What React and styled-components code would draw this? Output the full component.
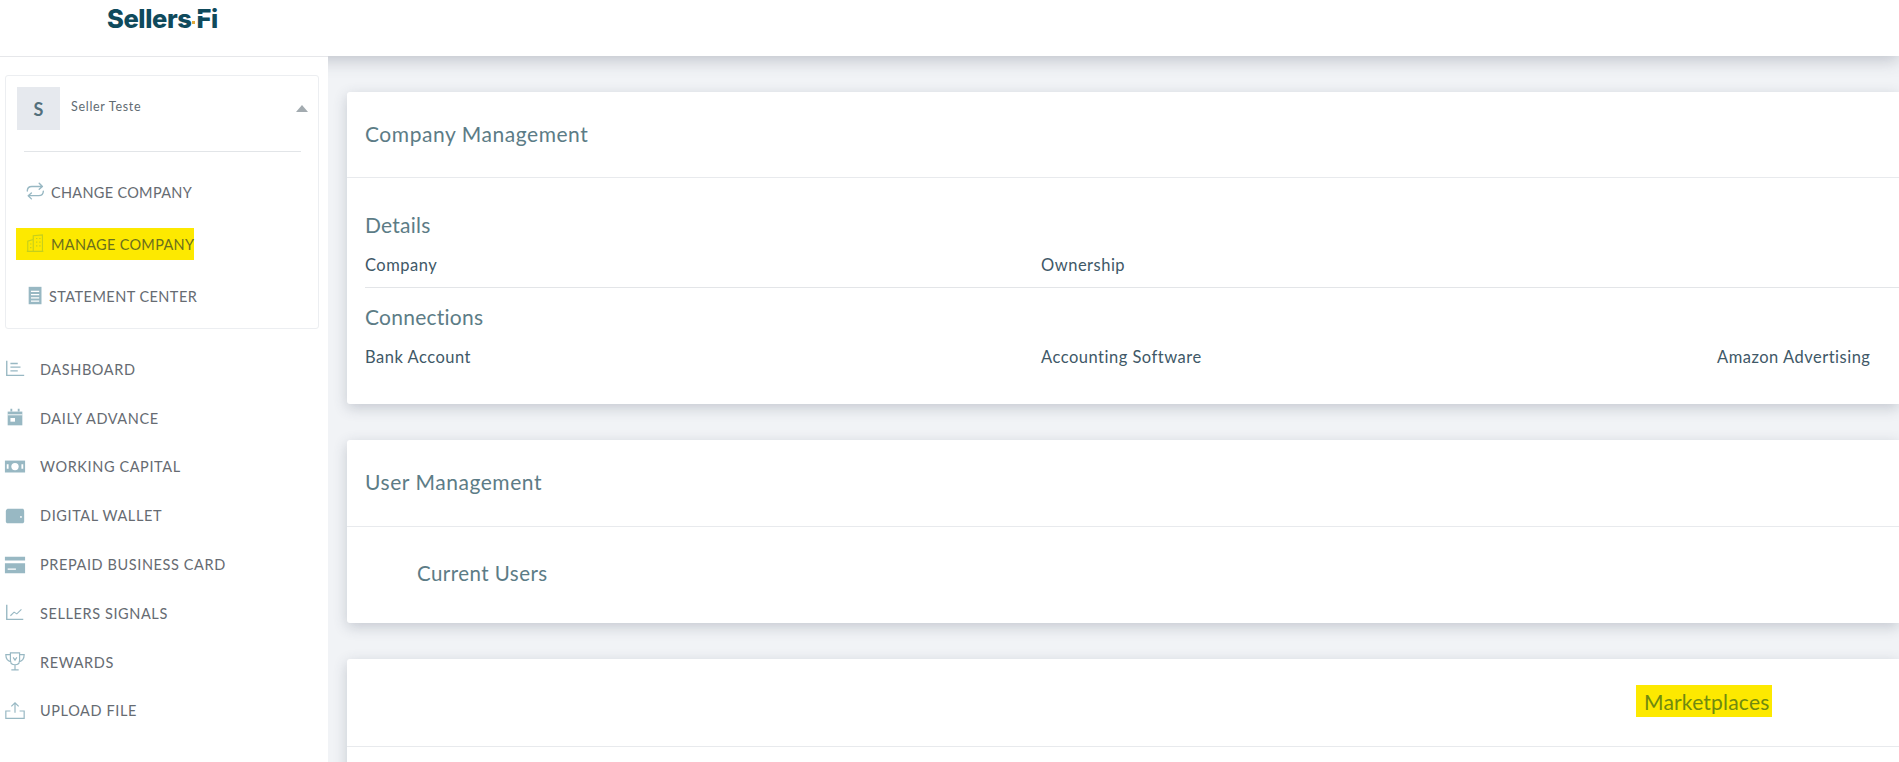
import React from "react";
import styled, { createGlobalStyle } from "styled-components";

const Global = createGlobalStyle`
  html, body { margin: 0; padding: 0; background: #fff; overflow: hidden; }
  body { font-family: "Lato", "Open Sans", sans-serif; }
  * { box-sizing: border-box; }
`;

const Page = styled.div`
  width: 1899px;
  height: 762px;
  display: flex;
  flex-direction: column;
  overflow: hidden;
`;

const Header = styled.header`
  height: 56px;
  flex: none;
  background: #fff;
  padding: 4px 0 0 107px;
  box-shadow: 0 4px 16px rgba(60, 70, 90, 0.28);
  position: relative;
  z-index: 1;
`;

const Logo = styled.div`
  display: flex;
  align-items: center;
  height: 28px;
  font-family: "Inter", sans-serif;
  font-weight: 800;
  font-size: 25.5px;
  letter-spacing: -0.4px;
  color: #0f4a5c;
`;

const LogoDot = styled.span`
  width: 3px;
  height: 3px;
  margin: 9px 1px 0 1px;
  background: #e0a93b;
  flex: none;
`;

const LogoFi = styled.span`
  position: relative;
  &::after {
    content: "";
    position: absolute;
    left: 0;
    right: 8px;
    top: 11px;
    height: 2px;
    background: #fff;
  }
`;

const Body = styled.div`
  flex: 1;
  display: flex;
  min-height: 0;
`;

const Sidebar = styled.aside`
  width: 328px;
  flex: none;
  background: #fff;
  border-top: 1px solid #e6e7ea;
  padding: 18px 9px 0 5px;
  position: relative;
  z-index: 2;
`;

const AccountBox = styled.div`
  height: 254px;
  border: 1px solid #eceef1;
  border-radius: 3px;
  padding: 11px 11px 0;
`;

const AccountHead = styled.div`
  display: flex;
  align-items: flex-start;
  padding-bottom: 22px;
  margin-bottom: 14px;
  position: relative;
  &::after {
    content: "";
    position: absolute;
    left: 7px;
    right: 6px;
    bottom: 0;
    height: 1px;
    background: #e2e5e8;
  }
`;

const Avatar = styled.div`
  width: 43px;
  height: 43px;
  flex: none;
  background: #e6e9ee;
  display: flex;
  align-items: center;
  justify-content: center;
  font-size: 18px;
  font-weight: 700;
  color: #54707c;
`;

const SellerName = styled.div`
  margin: 12px 0 0 11px;
  font-size: 12.5px;
  letter-spacing: 0.7px;
  color: #5f6b72;
  flex: 1;
`;

const Caret = styled.span`
  width: 0;
  height: 0;
  margin: 18px -1px 0 0;
  border-left: 6px solid transparent;
  border-right: 6px solid transparent;
  border-bottom: 7px solid #a3abb0;
`;

const AccountItem = styled.div`
  height: 52px;
  display: flex;
  align-items: center;
  gap: ${(p) => p.$gap}px;
  padding-left: 8px;
`;

const Highlight = styled.span`
  display: inline-flex;
  align-items: center;
  gap: 4px;
  height: 32px;
  margin-left: -9px;
  padding: 0 0 0 9px;
  background: #fde900;
`;

const ItemLabel = styled.span`
  font-size: 14.5px;
  letter-spacing: ${(p) => p.$tracking || 0.3}px;
  color: ${(p) => p.$color || "#666b72"};
  text-transform: uppercase;
`;

const NavList = styled.nav`
  margin-top: 16px;
  margin-left: -1px;
  display: flex;
  flex-direction: column;
`;

const NavItem = styled.div`
  height: 48.8px;
  display: flex;
  align-items: center;
  gap: 14px;
`;

const Main = styled.main`
  flex: 1;
  min-width: 0;
  background: #f1f3f6;
  padding: 36px 0 0 19px;
  display: flex;
  flex-direction: column;
  gap: 36px;
`;

const Card = styled.section`
  flex: none;
  background: #fff;
  border-radius: 3px 0 0 3px;
  box-shadow: 0 4px 14px rgba(60, 70, 90, 0.24);
`;

const CardHead = styled.div`
  height: ${(p) => p.$height}px;
  padding: 0 18px 3px;
  display: flex;
  align-items: center;
  border-bottom: 1px solid #e8eaed;
`;

const CardTitle = styled.h2`
  margin: 0;
  font-size: 21px;
  font-weight: 400;
  letter-spacing: 0.55px;
  color: #5c7c86;
`;

const MarketTitle = styled.h2`
  margin: 0 0 0 1271px;
  padding: 0 0 0 8px;
  width: 136px;
  height: 32px;
  line-height: 33px;
  background: #fde900;
  font-size: 21px;
  font-weight: 400;
  letter-spacing: 0.2px;
  color: #6f8a10;
`;

const CardBody = styled.div`
  padding: ${(p) => p.$pad || "0 0 0 18px"};
  height: ${(p) => p.$height}px;
`;

const SectionTitle = styled.h3`
  margin: 0;
  height: 30px;
  line-height: 30px;
  font-size: 21px;
  font-weight: 400;
  letter-spacing: 0.25px;
  color: #5c7c86;
`;

const FieldRow = styled.div`
  display: grid;
  grid-template-columns: 676px 676px 1fr;
  height: 48px;
  padding-top: 2px;
  align-items: center;
  font-size: 16.5px;
  letter-spacing: 0.5px;
  color: #405867;
  border-bottom: ${(p) => (p.$line ? "1px solid #e3e5e8" : "none")};
`;

const DetailsBlock = styled.div`
  padding-top: 32px;
`;

const ConnectionsBlock = styled.div`
  padding-top: 14px;
`;

const SubTitle = styled.div`
  padding: 34px 0 0 70px;
  font-size: 20.5px;
  letter-spacing: 0.45px;
  color: #5c7c86;
`;

const IconSvg = styled.svg`
  width: 22px;
  height: 22px;
  flex: none;
  color: ${(p) => p.$color || "#98b8c3"};
`;

const stroke = { fill: "none", stroke: "currentColor", strokeWidth: 1.5 };

const icons = {
  change: (
    <g {...stroke} strokeLinecap="round" strokeLinejoin="round">
      <path d="M2.5 11c0-3 2-5 5-5h11M15.500 2.500l3.500 3.500-3.500 3" />
      <path d="M20 11c0 3-2 5-5 5H4M7 19.500 3.500 16 7 13" />
    </g>
  ),
  manage: (
    <g {...stroke} strokeWidth="1.2">
      <path d="M3 20V9l6-2v13M9 20V3l10-1v18M2 20h18" />
      <path d="M5.500 12h1.500M5.500 16h1.500M12 6h1.500M15.500 6H17M12 10h1.500M15.500 10H17M12 14h1.500M15.500 14H17" />
    </g>
  ),
  statement: (
    <g>
      <path fill="currentColor" d="M4 2h14v19H4z" />
      <path stroke="#fff" strokeWidth="1.3" d="M6.500 7h9M6.500 10.500h9M6.500 14h9M6.500 17.500h9" />
    </g>
  ),
  dashboard: (
    <g {...stroke}>
      <path d="M3 3v16h19" />
      <path d="M7 6h8M7 10h11M7 14h8" />
    </g>
  ),
  daily: (
    <g>
      <path fill="currentColor" d="M4 5h16v15H4z" />
      <path stroke="currentColor" strokeWidth="2" d="M8 2v3M16 2v3" />
      <path stroke="#fff" strokeWidth="1" d="M4 8.500h16" />
      <path fill="#fff" d="M7 12h5v4H7z" />
    </g>
  ),
  capital: (
    <g>
      <path fill="currentColor" d="M1 5h22v13H1z" />
      <circle cx="12" cy="11.500" r="4" fill="#fff" />
      <path fill="#fff" d="M3 9h2v5H3zM19 9h2v5h-2z" />
    </g>
  ),
  wallet: (
    <g>
      <path fill="currentColor" d="M2 7c0-2 1-3 3-3h15c1.500 0 2 1 2 3v11c0 1-1 2-2 2H4c-1 0-2-1-2-2z" />
      <circle cx="18.500" cy="13" r="1" fill="#fff" />
    </g>
  ),
  card: (
    <g>
      <path fill="currentColor" d="M1 3h22v4H1zM1 10h22v11H1z" />
      <path stroke="#fff" strokeWidth="1.4" d="M4 16.500h9" />
    </g>
  ),
  signals: (
    <g {...stroke}>
      <path d="M3 3v16h18" />
      <path d="M7 15l4-4 3 2 5-5" strokeWidth="1.2" />
    </g>
  ),
  rewards: (
    <g {...stroke} strokeWidth="1.3">
      <path d="M7 2h10v8c0 3-2 5-5 5s-5-2-5-5zM7 4H2c0 4 2 7 6 8M17 4h5c0 4-2 7-6 8M12 15v5M8 20.500h8" />
      <path d="M10 7l2 3 2-3" />
    </g>
  ),
  upload: (
    <g {...stroke} strokeWidth="1.3">
      <path d="M12 14V3M8 7l4-4 4 4" />
      <path d="M7 12H2v8h20v-8h-5" />
    </g>
  ),
};

function Icon({ name, color }) {
  return (
    <IconSvg $color={color} viewBox="0 0 24 24">
      {icons[name]}
    </IconSvg>
  );
}

const navItems = [
  ["dashboard", "Dashboard"],
  ["daily", "Daily Advance"],
  ["capital", "Working Capital"],
  ["wallet", "Digital Wallet"],
  ["card", "Prepaid Business Card"],
  ["signals", "Sellers Signals"],
  ["rewards", "Rewards"],
  ["upload", "Upload File"],
];

export default function App() {
  return (
    <Page>
      <Global />
      <Header>
        <Logo>
          Sellers
          <LogoDot />
          <LogoFi>Fi</LogoFi>
        </Logo>
      </Header>
      <Body>
        <Sidebar>
          <AccountBox>
            <AccountHead>
              <Avatar>S</Avatar>
              <SellerName>Seller Teste</SellerName>
              <Caret />
            </AccountHead>
            <AccountItem $gap={4}>
              <Icon name="change" />
              <ItemLabel>Change Company</ItemLabel>
            </AccountItem>
            <AccountItem $gap={4}>
              <Highlight>
                <Icon name="manage" color="#c5cf1c" />
                <ItemLabel $color="#6b6f1e">Manage Company</ItemLabel>
              </Highlight>
            </AccountItem>
            <AccountItem $gap={2}>
              <Icon name="statement" />
              <ItemLabel $tracking={0.45}>Statement Center</ItemLabel>
            </AccountItem>
          </AccountBox>
          <NavList>
            {navItems.map(([icon, label]) => (
              <NavItem key={icon}>
                <Icon name={icon} />
                <ItemLabel $tracking={0.6}>{label}</ItemLabel>
              </NavItem>
            ))}
          </NavList>
        </Sidebar>
        <Main>
          <Card>
            <CardHead $height={86}>
              <CardTitle>Company Management</CardTitle>
            </CardHead>
            <CardBody $height={226}>
              <DetailsBlock>
                <SectionTitle>Details</SectionTitle>
                <FieldRow $line>
                  <span>Company</span>
                  <span>Ownership</span>
                </FieldRow>
              </DetailsBlock>
              <ConnectionsBlock>
                <SectionTitle>Connections</SectionTitle>
                <FieldRow>
                  <span>Bank Account</span>
                  <span>Accounting Software</span>
                  <span>Amazon Advertising</span>
                </FieldRow>
              </ConnectionsBlock>
            </CardBody>
          </Card>
          <Card>
            <CardHead $height={87}>
              <CardTitle>User Management</CardTitle>
            </CardHead>
            <CardBody $height={96} $pad="0">
              <SubTitle>Current Users</SubTitle>
            </CardBody>
          </Card>
          <Card>
            <CardHead $height={88}>
              <MarketTitle>Marketplaces</MarketTitle>
            </CardHead>
            <CardBody $height={40} />
          </Card>
        </Main>
      </Body>
    </Page>
  );
}
